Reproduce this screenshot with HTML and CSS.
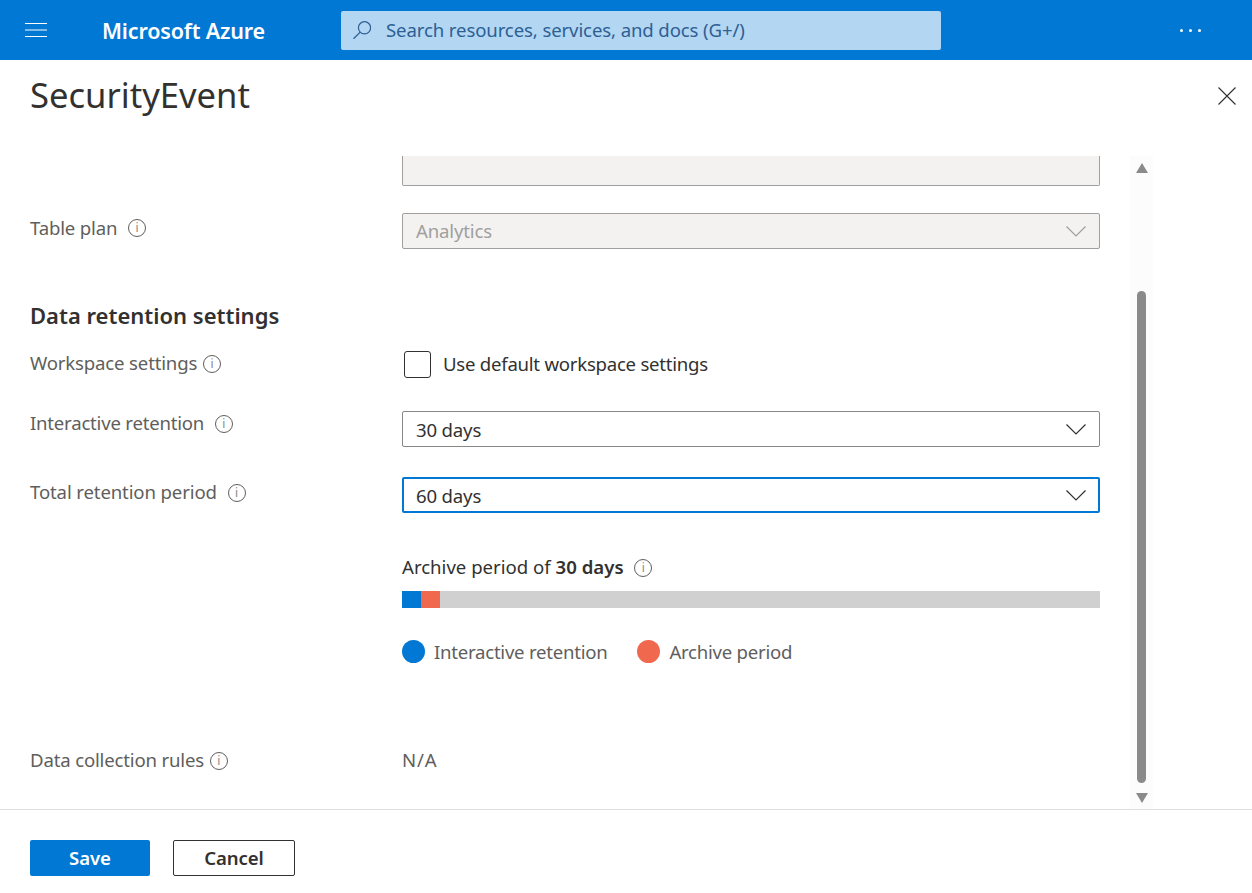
FILE: index.html
```html
<!DOCTYPE html>
<html lang="en">
<head>
  <meta charset="UTF-8" />
  <meta name="viewport" content="width=device-width, initial-scale=1.0"/>
  <title>SecurityEvent</title>
  <link rel="stylesheet" href="styles.css">
</head>
<body>

  <header class="topbar">
    <button class="menu-btn" aria-label="Menu">
      <svg width="22" height="14" viewBox="0 0 22 14"><path d="M0 0.5h22M0 7h22M0 13.5h22" stroke="#fff" stroke-width="1.2" fill="none"/></svg>
    </button>
    <div class="brand">Microsoft Azure</div>
    <div class="search">
      <svg width="18" height="18" viewBox="0 0 18 18"><circle cx="11.5" cy="6.8" r="6.1" stroke="#2d5f94" stroke-width="1.2" fill="none"/><path d="M7.2 11.1L0.5 17.8" stroke="#2d5f94" stroke-width="1.3" fill="none"/></svg>
      <span class="search-text">Search resources, services, and docs (G+/)</span>
    </div>
    <div class="more"><i></i><i></i><i></i></div>
  </header>

  <div class="title-row">
    <h1>SecurityEvent</h1>
    <button class="close-btn" aria-label="Close">
      <svg width="18" height="18" viewBox="0 0 18 18"><path d="M0.5 0.5L17.5 17.5M17.5 0.5L0.5 17.5" stroke="#323130" stroke-width="1.1" fill="none"/></svg>
    </button>
  </div>

  <main class="panel">
    <div class="content">
      <div class="row row-cut">
        <div></div>
        <div class="cut-input"></div>
      </div>

      <div class="row row-plan">
        <div class="label">Table plan <span class="info info-wide">i</span></div>
        <div class="select disabled">
          <span>Analytics</span>
          <svg width="20" height="11" viewBox="0 0 20 11"><path d="M0.5 0.5L10 10L19.5 0.5" stroke="#a19f9d" stroke-width="1.2" fill="none"/></svg>
        </div>
      </div>

      <h2>Data retention settings</h2>

      <div class="row row-workspace">
        <div class="label">Workspace settings <span class="info">i</span></div>
        <label class="check"><span class="box"></span><span class="check-text">Use default workspace settings</span></label>
      </div>

      <div class="row row-interactive">
        <div class="label">Interactive retention <span class="info info-wide">i</span></div>
        <div class="select">
          <span>30 days</span>
          <svg width="20" height="11" viewBox="0 0 20 11"><path d="M0.5 0.5L10 10L19.5 0.5" stroke="#323130" stroke-width="1.2" fill="none"/></svg>
        </div>
      </div>

      <div class="row row-total">
        <div class="label">Total retention period <span class="info info-wide">i</span></div>
        <div class="select focused">
          <span>60 days</span>
          <svg width="20" height="11" viewBox="0 0 20 11"><path d="M0.5 0.5L10 10L19.5 0.5" stroke="#323130" stroke-width="1.2" fill="none"/></svg>
        </div>
      </div>

      <div class="row row-archive">
        <div></div>
        <div>
          <div class="archive-text">Archive period of <b>30 days</b> <span class="info info-wide">i</span></div>
          <div class="bar">
            <div class="bar-part blue"></div>
            <div class="bar-part coral"></div>
          </div>
          <div class="legend">
            <div class="legend-item"><span class="dot blue"></span>Interactive retention</div>
            <div class="legend-item"><span class="dot coral"></span>Archive period</div>
          </div>
        </div>
      </div>

      <div class="row row-rules">
        <div class="label">Data collection rules <span class="info">i</span></div>
        <div class="value">N/A</div>
      </div>
    </div>

    <div class="scrollbar">
      <span class="arrow up"></span>
      <div class="track"><div class="thumb"></div></div>
      <span class="arrow down"></span>
    </div>
  </main>

  <footer class="footer">
    <button class="btn btn-save">Save</button>
    <button class="btn btn-cancel">Cancel</button>
  </footer>

</body>
</html>
```

FILE: styles.css
```css
* {
  box-sizing: border-box;
}

body {
  margin: 0;
  height: 893px;
  overflow: hidden;
  display: flex;
  flex-direction: column;
  font-family: 'Noto Sans', 'Open Sans', sans-serif;
  font-size: 18.6px;
  letter-spacing: -0.17px;
  color: #323130;
  background: white;
}

button {
  font-family: inherit;
  background: none;
  border: none;
  padding: 0;
}

.topbar {
  height: 60px;
  flex: none;
  display: flex;
  align-items: center;
  background-color: #0078d4;
  color: white;
}

.menu-btn {
  width: 25px;
  height: 14px;
  margin-left: 25px;
  display: flex;
}

.brand {
  margin-left: 52px;
  width: 239px;
  font-size: 21.5px;
  font-weight: 600;
  letter-spacing: -0.15px;
}

.search {
  width: 600px;
  height: 39px;
  margin-top: 1px;
  display: flex;
  align-items: center;
  gap: 15px;
  padding-left: 12px;
  background-color: #b3d6f2;
  border-radius: 2px;
  color: #2d5f94;
}

.search svg {
  margin-bottom: 1px;
}

.search-text {
  margin-bottom: 2px;
  letter-spacing: -0.12px;
}

.more {
  margin-left: 239px;
  display: flex;
  gap: 6px;
}

.more i {
  width: 3px;
  height: 3px;
  border-radius: 50%;
  background: white;
}

.title-row {
  height: 96px;
  flex: none;
  display: flex;
  justify-content: space-between;
  align-items: flex-start;
  padding: 13px 16px 0 30px;
}

h1 {
  margin: 0;
  font-size: 34.6px;
  line-height: 44px;
  font-weight: 400;
  letter-spacing: 0;
}

.close-btn {
  margin-top: 14px;
  width: 18px;
  height: 18px;
  display: flex;
}

.panel {
  height: 654px;
  flex: none;
  display: flex;
  border-bottom: 1px solid #e1dfdd;
}

.content {
  width: 1100px;
  padding-left: 30px;
}

.row {
  display: grid;
  grid-template-columns: 372px 698px;
}

.label {
  color: #605e5c;
  line-height: 26px;
}

.info {
  display: inline-block;
  width: 18px;
  height: 18px;
  margin-left: 1px;
  border: 1px solid #605e5c;
  border-radius: 50%;
  font-size: 12px;
  line-height: 16px;
  text-align: center;
  vertical-align: 2px;
  color: #8a8886;
}

.info-wide {
  margin-left: 6px;
}

.row-plan .info {
  vertical-align: 3px;
}

.cut-input {
  height: 30px;
  background: #f3f2f1;
  border: 1px solid #a19f9d;
  border-top: none;
  border-radius: 0 0 2px 2px;
}

.select {
  height: 36px;
  display: flex;
  justify-content: space-between;
  align-items: center;
  padding: 0 13px;
  background: white;
  border: 1px solid #8a8886;
  border-radius: 2px;
}

.select.disabled {
  background: #f3f2f1;
  border-color: #a19f9d;
  color: #a19f9d;
}

.select.disabled span {
  margin-bottom: 2px;
}

.select.focused {
  border: 2px solid #0078d4;
  padding: 0 12px;
}

.row-plan {
  margin-top: 27px;
}

.row-plan .label {
  padding-top: 2px;
}

h2 {
  margin: 50px 0 0;
  font-size: 22px;
  line-height: 32px;
  font-weight: 600;
  letter-spacing: 0;
}

.row-workspace {
  margin-top: 20px;
}

.row-workspace .label {
  margin-top: -1px;
}

.check {
  display: flex;
  align-items: center;
  gap: 12px;
  margin-left: 2px;
}

.check-text {
  margin-bottom: 2px;
  letter-spacing: -0.25px;
}

.box {
  width: 27px;
  height: 27px;
  background: white;
  border: 1px solid #323130;
  border-radius: 3px;
}

.row-interactive {
  margin-top: 33px;
}

.row-interactive .label {
  margin-top: -1px;
  letter-spacing: -0.22px;
}

.row-total {
  margin-top: 30px;
}

.row-total .label {
  padding-top: 2px;
  letter-spacing: -0.13px;
}

.row-archive {
  margin-top: 41px;
}

.archive-text {
  line-height: 26px;
  letter-spacing: 0;
}

.archive-text b {
  font-weight: 600;
}

.bar {
  height: 17px;
  margin-top: 11px;
  display: flex;
  background: #d0d0d0;
}

.bar-part {
  width: 19px;
}

.blue {
  background: #0078d4;
}

.coral {
  background: #f0694f;
}

.legend {
  margin-top: 31px;
  display: flex;
  gap: 30px;
  color: #605e5c;
  letter-spacing: -0.25px;
}

.legend-item {
  display: flex;
  align-items: center;
  gap: 9px;
}

.dot {
  width: 23px;
  height: 23px;
  border-radius: 50%;
}

.row-rules {
  margin-top: 83px;
}

.value {
  color: #605e5c;
  line-height: 26px;
  letter-spacing: 0.8px;
}

.scrollbar {
  width: 23px;
  margin-left: 30px;
  display: flex;
  flex-direction: column;
  align-items: center;
  background: #fcfcfc;
}

.arrow {
  flex: none;
  width: 0;
  height: 0;
  border-left: 6px solid transparent;
  border-right: 6px solid transparent;
}

.arrow.up {
  margin-top: 7px;
  border-bottom: 10px solid #8a8a8a;
}

.arrow.down {
  margin-bottom: 6px;
  border-top: 10px solid #8a8a8a;
}

.track {
  flex: 1;
  padding: 118px 0 10px;
}

.thumb {
  width: 9px;
  height: 100%;
  background: #8a8a8a;
  border-radius: 5px;
}

.footer {
  flex: 1;
  display: flex;
  align-items: flex-start;
  gap: 23px;
  padding: 30px 0 0 30px;
}

.btn {
  height: 36px;
  padding-bottom: 2px;
  border-radius: 2px;
  font-size: 18.6px;
  font-weight: 600;
  letter-spacing: -0.1px;
}

.btn-save {
  width: 120px;
  background-color: #0078d4;
  color: white;
}

.btn-cancel {
  width: 122px;
  background: white;
  border: 1px solid #323130;
  color: #323130;
}
```
